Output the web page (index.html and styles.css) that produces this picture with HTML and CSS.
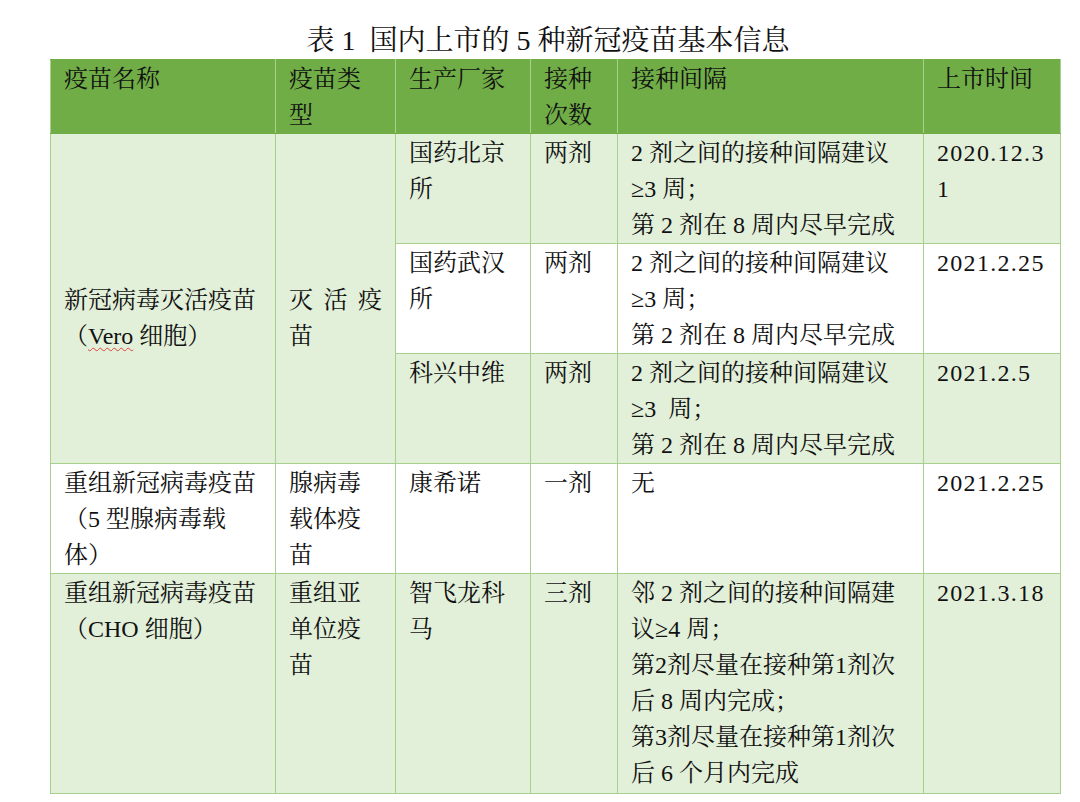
FILE: index.html
```html
<!DOCTYPE html>
<html lang="zh-CN">
<head>
<meta charset="utf-8">
<title>表1 国内上市的5种新冠疫苗基本信息</title>
<link rel="stylesheet" href="styles.css">
</head>
<body>
<div class="page">
  <div class="title">表 1&nbsp;&nbsp;国内上市的 5 种新冠疫苗基本信息</div>
  <table class="vt">
    <colgroup>
      <col class="c-name">
      <col class="c-type">
      <col class="c-maker">
      <col class="c-doses">
      <col class="c-interval">
      <col class="c-date">
    </colgroup>
    <thead>
      <tr class="head">
        <th>疫苗名称</th>
        <th>疫苗类<br>型</th>
        <th>生产厂家</th>
        <th>接种<br>次数</th>
        <th>接种间隔</th>
        <th>上市时间</th>
      </tr>
    </thead>
    <tbody>
      <tr class="g">
        <td rowspan="3" class="mid">新冠病毒灭活疫苗<br>（<span class="typo">Vero</span> 细胞）</td>
        <td rowspan="3" class="mid just">灭活疫苗</td>
        <td>国药北京<br>所</td>
        <td>两剂</td>
        <td>2 剂之间的接种间隔建议<br>≥3 周；<br>第 2 剂在 8 周内尽早完成</td>
        <td class="num">2020.12.3<br>1</td>
      </tr>
      <tr class="w">
        <td>国药武汉<br>所</td>
        <td>两剂</td>
        <td>2 剂之间的接种间隔建议<br>≥3 周；<br>第 2 剂在 8 周内尽早完成</td>
        <td class="num">2021.2.25</td>
      </tr>
      <tr class="g">
        <td>科兴中维</td>
        <td>两剂</td>
        <td>2 剂之间的接种间隔建议<br>≥3&nbsp; 周；<br>第 2 剂在 8 周内尽早完成</td>
        <td class="num">2021.2.5</td>
      </tr>
      <tr class="w">
        <td>重组新冠病毒疫苗<br>（5 型腺病毒载<br>体）</td>
        <td>腺病毒<br>载体疫<br>苗</td>
        <td>康希诺</td>
        <td>一剂</td>
        <td>无</td>
        <td class="num">2021.2.25</td>
      </tr>
      <tr class="g last">
        <td>重组新冠病毒疫苗<br>（CHO 细胞）</td>
        <td>重组亚<br>单位疫<br>苗</td>
        <td>智飞龙科<br>马</td>
        <td>三剂</td>
        <td>邻 2 剂之间的接种间隔建<br>议≥4 周；<br>第2剂尽量在接种第1剂次<br>后 8 周内完成；<br>第3剂尽量在接种第1剂次<br>后 6 个月内完成</td>
        <td class="num">2021.3.18</td>
      </tr>
    </tbody>
  </table>
</div>
</body>
</html>
```

FILE: styles.css
```css
html, body {
  margin: 0;
  padding: 0;
  background: #ffffff;
}

body {
  font-family: "Liberation Serif", "Noto Serif CJK SC", "Noto Sans CJK SC", serif;
  color: #111111;
}

.page {
  width: 1080px;
  padding-top: 23px;
}

.title {
  width: 1010px;
  margin-left: 50px;
  text-align: center;
  font-size: 28px;
  line-height: 36px;
  padding-right: 14px;
  box-sizing: border-box;
  white-space: pre;
}

.vt {
  margin-left: 50px;
  width: 1010px;
  table-layout: fixed;
  border-collapse: collapse;
  font-size: 24px;
  line-height: 36px;
}

.c-name { width: 225px; }
.c-type { width: 120px; }
.c-maker { width: 135px; }
.c-doses { width: 87px; }
.c-interval { width: 306px; }
.c-date { width: 137px; }

.vt th,
.vt td {
  border: 1px solid #a8d08d;
  padding: 1px 13px 0 13px;
  text-align: left;
  vertical-align: top;
  font-weight: normal;
  white-space: nowrap;
}

.head th {
  background: #70ad47;
  border-color: #a8d08d;
  border-top-color: #70ad47;
  border-bottom-color: #70ad47;
  padding-top: 1px;
}

.g td { background: #e2efd9; }
.w td { background: #ffffff; }

.vt td.mid {
  vertical-align: middle;
  padding-top: 38px;
}

.vt td.just {
  white-space: normal;
  text-align: justify;
}

.last td { padding-bottom: 2px; }

.num { letter-spacing: 1.3px; }

.typo {
  text-decoration: underline wavy #e0403a;
  text-decoration-thickness: 1px;
  text-underline-offset: 3px;
}
```
